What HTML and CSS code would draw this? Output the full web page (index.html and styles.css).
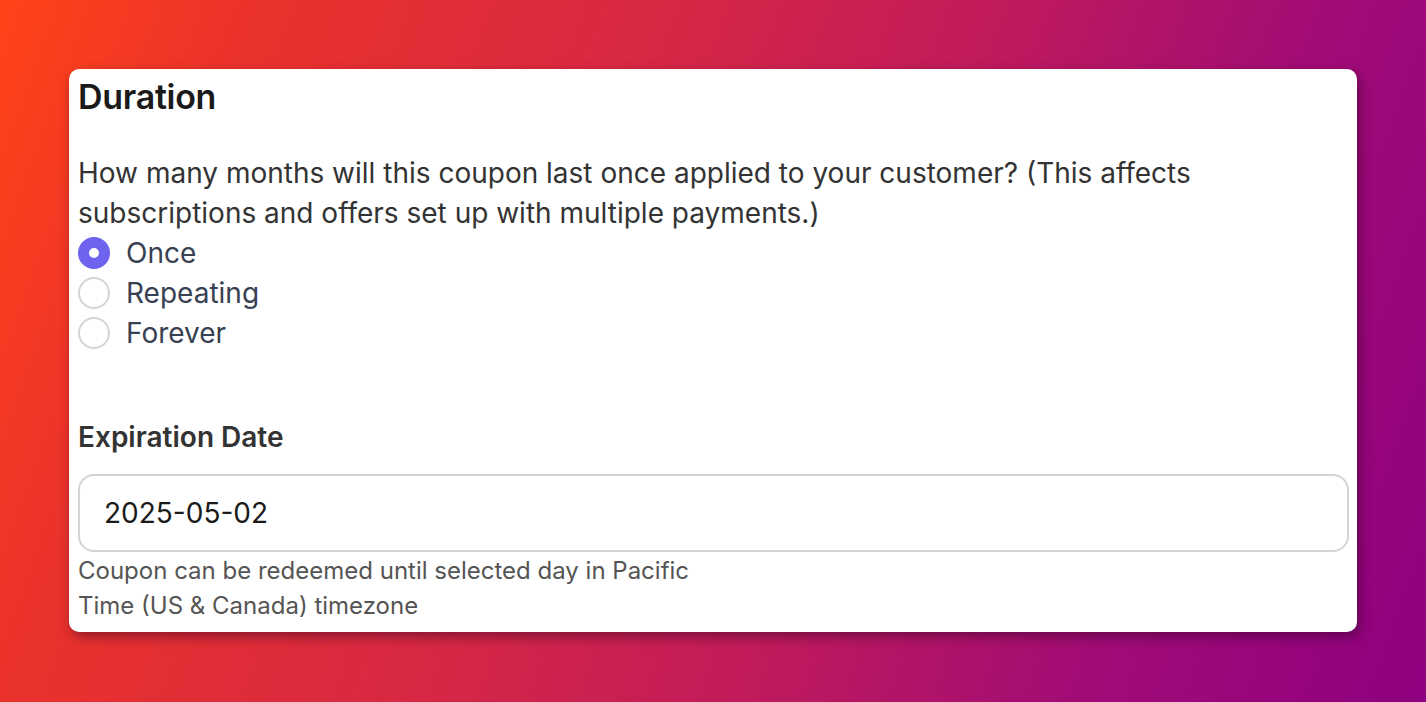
FILE: index.html
```html
<!DOCTYPE html>
<html lang="en">
<head>
    <meta charset="UTF-8">
    <meta name="viewport" content="width=device-width, initial-scale=1.0">
    <title>Coupon Duration</title>
    <link rel="stylesheet" href="styles.css">
</head>
<body>
    <div class="card">
        <h2 class="title">Duration</h2>
        <p class="hint">How many months will this coupon last once applied to your customer? (This affects subscriptions and offers set up with multiple payments.)</p>

        <div class="radio-list">
            <label class="radio-row">
                <input type="radio" name="duration" value="once" checked>
                <span>Once</span>
            </label>
            <label class="radio-row">
                <input type="radio" name="duration" value="repeating">
                <span>Repeating</span>
            </label>
            <label class="radio-row">
                <input type="radio" name="duration" value="forever">
                <span>Forever</span>
            </label>
        </div>

        <label class="field-label" for="expires">Expiration Date</label>
        <input class="date-input" id="expires" type="text" value="2025-05-02">
        <p class="help">Coupon can be redeemed until selected day in Pacific Time (US &amp; Canada) timezone</p>
    </div>
</body>
</html>
```

FILE: styles.css
```css
html, body {
    height: 100%;
}
body {
    margin: 0;
    padding: 69px 69px 0 69px;
    box-sizing: border-box;
    font-family: 'Inter', 'Noto Sans', sans-serif;
    background: linear-gradient(110deg, #ff4318 0%, #ea322b 15%, #d82843 39%, #bf1a5c 60%, #a00b76 80%, #8e0080 100%);
}
.card {
    background-color: white;
    border-radius: 10px;
    padding: 8px 8px 9px 9px;
    box-shadow: 3px 5px 12px rgba(40, 0, 30, 0.45);
}
.title {
    margin: 0;
    font-size: 34px;
    line-height: 40px;
    font-weight: 600;
    color: #1a1a1a;
    letter-spacing: -0.3px;
}
.hint {
    margin: 36px 0 0;
    font-size: 28px;
    line-height: 40px;
    color: #333;
}
.radio-list {
    display: flex;
    flex-direction: column;
}
.radio-row {
    display: flex;
    align-items: center;
    gap: 16px;
    height: 40px;
    font-size: 28px;
    color: #374151;
}
.radio-row input {
    appearance: none;
    -webkit-appearance: none;
    margin: 0;
    width: 32px;
    height: 32px;
    border-radius: 50%;
    border: 2px solid #d4d4d4;
    background-color: white;
    box-sizing: border-box;
}
.radio-row input:checked {
    border: 11px solid #6d63ef;
}
.field-label {
    display: block;
    margin-top: 64px;
    font-size: 28px;
    line-height: 40px;
    font-weight: 600;
    color: #333;
}
.date-input {
    display: block;
    width: 100%;
    box-sizing: border-box;
    margin-top: 17px;
    height: 78px;
    padding: 0 24px;
    border: 2px solid #d4d4d4;
    border-radius: 16px;
    font-family: 'Inter', 'Noto Sans', sans-serif;
    font-size: 28px;
    color: #1a1a1a;
}
.help {
    margin: 1px 0 0;
    max-width: 640px;
    font-size: 24px;
    line-height: 35px;
    color: #555;
}
```
